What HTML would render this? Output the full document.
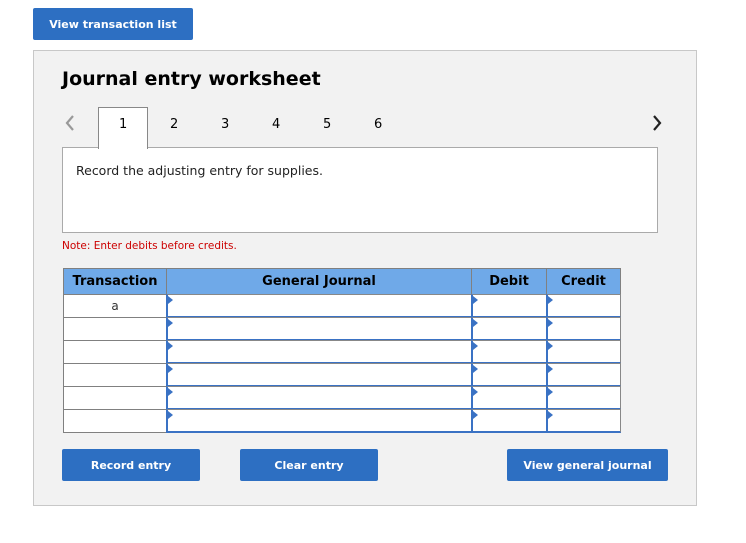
<!DOCTYPE html><html><head><style>
body{margin:0;width:746px;height:543px;background:#fff;font-family:"DejaVu Sans","Liberation Sans",sans-serif;position:relative;overflow:hidden}
.a{position:absolute}
.btn{position:absolute;background:#2d6fc2;color:#fff;font-size:11px;font-weight:bold;text-align:center;border-radius:2px}
.h{background:#6fa9e8;border:1px solid #808080;font-weight:bold;font-size:13px;text-align:center;line-height:26px;box-sizing:border-box}
.c{background:#fff;border:1px solid #808080;box-sizing:border-box;font-size:12px;text-align:center;line-height:22px;color:#333}
.i{background:#fff;box-sizing:border-box;border:2px solid #3a72c4;border-right:1px solid #888;border-top:1px solid #888}
.i:before{content:"";position:absolute;left:0;top:1px;border-left:5px solid #3a72c4;border-top:4px solid transparent;border-bottom:4px solid transparent}
</style></head><body>
<div class="btn" style="left:33px;top:8px;width:160px;height:32px;line-height:33px">View transaction list</div>
<div class="a" style="left:33px;top:50px;width:662px;height:454px;background:#f2f2f2;border:1px solid #c8c8c8"></div>
<div class="a" style="left:62px;top:68px;font-size:19px;font-weight:bold">Journal entry worksheet</div>
<svg class="a" style="left:64px;top:114px" width="12" height="18"><path d="M9 2 L3 9 L9 16" stroke="#999" stroke-width="2.2" fill="none"/></svg>
<svg class="a" style="left:651px;top:114px" width="12" height="18"><path d="M3 2 L9 9 L3 16" stroke="#222" stroke-width="2.2" fill="none"/></svg>
<div class="a" style="left:98px;top:107px;width:50px;height:42px;background:#fff;border:1px solid #888;border-bottom:none;box-sizing:border-box;z-index:2"></div>
<div class="a" style="left:62px;top:147px;width:596px;height:86px;background:#fff;border:1px solid #aaa;box-sizing:border-box"></div>
<div class="a" style="left:119px;top:117px;font-size:13px;z-index:3">1</div>
<div class="a" style="left:170px;top:117px;font-size:13px">2</div>
<div class="a" style="left:221px;top:117px;font-size:13px">3</div>
<div class="a" style="left:272px;top:117px;font-size:13px">4</div>
<div class="a" style="left:323px;top:117px;font-size:13px">5</div>
<div class="a" style="left:374px;top:117px;font-size:13px">6</div>
<div class="a" style="left:76px;top:163px;font-size:12.5px;color:#222">Record the adjusting entry for supplies.</div>
<div class="a" style="left:62px;top:240px;font-size:10.5px;color:#c00">Note: Enter debits before credits.</div>
<div class="a h" style="left:63px;top:268px;width:104px;height:27px">Transaction</div>
<div class="a h" style="left:166px;top:268px;width:306px;height:27px">General Journal</div>
<div class="a h" style="left:471px;top:268px;width:76px;height:27px">Debit</div>
<div class="a h" style="left:546px;top:268px;width:75px;height:27px">Credit</div>
<div id="rows"></div>
<script>
var h='';for(var r=0;r<6;r++){var y=294+r*23;
h+='<div class="a c" style="left:63px;top:'+y+'px;width:104px;height:24px">'+(r==0?'a':'')+'</div>';
h+='<div class="a i" style="left:166px;top:'+y+'px;width:306px;height:24px"></div>';
h+='<div class="a i" style="left:471px;top:'+y+'px;width:76px;height:24px"></div>';
h+='<div class="a i" style="left:546px;top:'+y+'px;width:75px;height:24px"></div>';}
document.getElementById('rows').innerHTML=h;
</script>
<div class="btn" style="left:62px;top:449px;width:138px;height:32px;line-height:33px">Record entry</div>
<div class="btn" style="left:240px;top:449px;width:138px;height:32px;line-height:33px">Clear entry</div>
<div class="btn" style="left:507px;top:449px;width:161px;height:32px;line-height:33px">View general journal</div>
</body></html>
